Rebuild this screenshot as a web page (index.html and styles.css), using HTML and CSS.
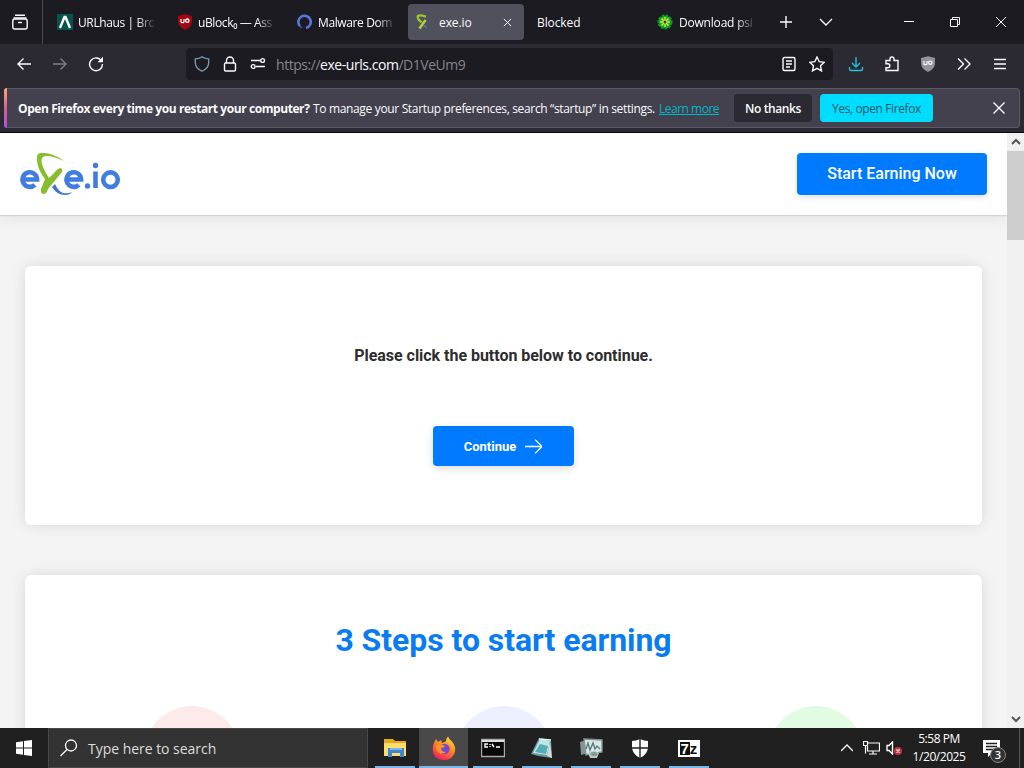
FILE: index.html
```html
<!DOCTYPE html>
<html lang="en">
<head>
<meta charset="utf-8">
<title>exe.io</title>
<link rel="stylesheet" href="styles.css">
</head>
<body>
<div class="screen">
  <div class="tabstrip">
    <div class="firefox-view"><svg class="i20" viewBox="0 0 20 20"><path d="M5 3.2h10M3.5 6h13"/><rect x="2.8" y="7" width="14.4" height="10" rx="2"/><path d="M8 10.5h4"/></svg></div>
    <div class="tab"><svg class="i16" viewBox="0 0 16 16"><path fill="#07544e" stroke="none" d="M0 0h16v16H0z"/><path stroke="#fff" stroke-width="2.4" d="M3 14 7.500 3h1L13 14"/></svg><span class="tab-title fade tight">URLhaus | Bro</span></div>
    <div class="tab"><svg class="i16" viewBox="0 0 16 16"><path fill="#a00812" stroke="none" d="M8 0 15 2v5q0 6-7 9Q1 13 1 7V2z"/><path stroke="#fff" stroke-width="1.2" d="M4 5v3q1.500 1.400 3 0V5"/><circle cx="10.3" cy="6.7" r="1.7" stroke="#fff" stroke-width="1.3"/></svg><span class="tab-title fade tight">uBlock₀ — Ass</span></div>
    <div class="tab"><svg class="i16" viewBox="0 0 16 16"><path stroke="#5877dc" stroke-width="2.6" d="M3 12.2A6.2 6.2 0 1 1 9 14"/><path stroke="#35498f" stroke-width="2" d="M3 12.2l2 1.7"/></svg><span class="tab-title fade tight">Malware Dom</span></div>
    <div class="tab tab-active"><svg class="i16" viewBox="0 0 16 16"><path stroke="#9fc62b" stroke-width="2.3" d="M11 2.600Q3 .2 2.600 2.400q0 3 4 6"/><path stroke="#b5d334" stroke-width="2.500" d="M10.500 6 4.500 14.500"/><path stroke="#527fa2" stroke-width="1.300" d="m8.500 11 3.500 3"/></svg><span class="tab-title">exe.io</span><svg class="tab-close" viewBox="0 0 10 10"><path d="m1 1 8 8M9 1 1 9"/></svg></div>
    <div class="tab tab-plain"><span class="tab-title">Blocked</span></div>
    <div class="tab"><svg class="i16" viewBox="0 0 16 16"><circle cx="8" cy="8" r="6.3" fill="#11bd24" stroke="#0b9a24" stroke-width="2.500" stroke-dasharray="2.500 1.200"/><path stroke="#dce844" stroke-width="1.300" d="M8 3v10M3 8h10M4.500 4.500l7 7M11.500 4.500l-7 7"/><circle cx="8" cy="8" r="1.500" fill="#433500" stroke="none"/></svg><span class="tab-title fade download">Download psi</span></div>
    <div class="tab-tools"><svg class="i16" viewBox="0 0 16 16"><path d="M8 2v12M2 8h12"/></svg><svg class="i16" viewBox="0 0 16 16"><path d="m2 5 6 6 6-6"/></svg></div>
    <div class="window-tools"><svg class="i12" viewBox="0 0 12 12"><path d="M1 5.500h10"/></svg><svg class="i12" viewBox="0 0 12 12"><path d="M1.500 3.500h7v7h-7zM3.500 3.500v-2h7v7h-2"/></svg><svg class="i12" viewBox="0 0 12 12"><path d="m1 1 10 10M11 1 1 11"/></svg></div>
  </div>

  <div class="navbar">
    <div class="nav-buttons">
      <svg class="i16" viewBox="0 0 16 16"><path d="M15 8H1.500M7.500 2.500 2 8l5.500 5.500"/></svg>
      <svg class="i16 dim" viewBox="0 0 16 16"><path d="M1 8h13.500M8.500 2.500 14 8l-5.500 5.500"/></svg>
      <svg class="i16" viewBox="0 0 16 16"><path d="M13.600 5.200A6.400 6.400 0 1 0 14.400 8"/><path fill="#fbfbfe" stroke="none" d="M15 .8V6.300H9.500z"/></svg>
    </div>
    <div class="urlbar">
      <div class="url-icons">
        <svg class="i16 shield" viewBox="0 0 16 16"><path d="M8 .9q3.500 1.900 6.700 2v3.600q0 5.800-6.700 8.700Q1.300 12.300 1.300 6.500V2.900Q4.500 2.800 8 .9z"/></svg>
        <svg class="i16" viewBox="0 0 16 16"><rect x="2.500" y="7" width="11" height="8" rx="1.200"/><path d="M4.500 7V4.500a3.500 3.500 0 0 1 7 0V7"/></svg>
        <svg class="i16" viewBox="0 0 16 16"><path d="M1 4.500h9M6 10.500h9"/><circle cx="12.600" cy="4.500" r="1.900"/><circle cx="3.200" cy="10.500" r="1.900"/></svg>
      </div>
      <div class="url">https://<span class="domain">exe-urls.com</span>/D1VeUm9</div>
      <div class="url-actions">
        <svg class="i16" viewBox="0 0 16 16"><rect x="2" y="1.500" width="12" height="13" rx="1.500"/><path d="M5 5h6M5 8h6M5 11h4"/></svg>
        <svg class="i16" viewBox="0 0 16 16"><path d="m8 1 2.200 4.700 5.100.6-3.800 3.500 1 5.100L8 12.400l-4.500 2.500 1-5.100L.7 6.300l5.100-.6z"/></svg>
      </div>
    </div>
    <div class="nav-tools">
      <svg class="i16 cyan" viewBox="0 0 16 16"><path d="M8 1v9.500M4 7l4 4 4-4M1.500 11v2q0 1.500 1.500 1.500h10q1.500 0 1.500-1.500v-2"/></svg>
      <svg class="i16" viewBox="0 0 16 16"><path d="M2 14.500h12V4.500h-4V3a2 2 0 0 0-4 0v1.500H2v3.300h1.800a2 2 0 0 1 0 4H2z"/></svg>
      <svg class="i16" viewBox="0 0 16 16"><path fill="#929298" stroke="none" d="M8 .3 15 2v5q0 6-7 9Q1 13 1 7V2z"/><path stroke-width="1.200" d="M4 5v3q1.500 1.400 3 0V5"/><circle cx="10.300" cy="6.700" r="1.700" stroke-width="1.200"/></svg>
      <svg class="i16" viewBox="0 0 16 16"><path d="m2 2.500 5.500 5.500L2 13.500M8.500 2.500 14 8l-5.500 5.500"/></svg>
      <svg class="i16" viewBox="0 0 16 16"><path d="M2 3.500h12M2 8h12M2 12.500h12"/></svg>
    </div>
  </div>

  <div class="notice-wrap">
    <div class="notice-accent"></div>
    <div class="notice">
      <strong class="notice-strong">Open Firefox every time you restart your computer?</strong>
      <span class="notice-copy">To manage your Startup preferences, search “startup” in settings.</span>
      <span class="notice-link">Learn more</span>
      <span class="notice-button no">No thanks</span>
      <span class="notice-button yes">Yes, open Firefox</span>
      <svg class="notice-close" viewBox="0 0 12 12"><path d="m.5.5 11 11M11.500.5l-11 11"/></svg>
    </div>
  </div>

  <div class="viewport">
    <div class="page">
      <header class="site-header">
        <svg class="logo" viewBox="0 0 102 44" role="img" aria-label="exe.io">
          <g class="logo-blue"><path d="M2.500 26.500h14.600a7.300 7.300 0 1 0-2.200 5.300M46.500 26.500h14.600a7.300 7.300 0 1 0-2.200 5.300M75.500 18.500v16.500"/><circle cx="90.500" cy="26.700" r="7.300"/></g>
          <circle class="logo-dot" cx="67.500" cy="33" r="2.700"/><circle class="logo-dot" cx="75.500" cy="12.500" r="2.700"/>
          <path fill="#88bd2d" d="M44 8Q32-1 20 0q-4 1-3 8 1 9 8 18l-4 10q-1 4 2 5 4 0 5-5l14-17q1-4-2-4-3 1-5 4l-6 6Q18 8 23 4q5-3 21 4z"/>
          <path fill="#3e75d5" d="m35 31q3 7 8 9 5 1 9-1-2 3-7 3-8 0-13-8z"/>
        </svg>
        <div class="blue-button earn">Start Earning Now</div>
      </header>
      <main class="content">
        <section class="card gate">
          <p class="prompt">Please click the button below to continue.</p>
          <div class="blue-button continue"><span>Continue</span><svg class="continue-arrow" viewBox="0 0 16 16"><path d="M0 8h15.300M9.500 1.500 16 8l-6.500 6.500"/></svg></div>
        </section>
        <section class="card steps">
          <h2 class="steps-title">3 Steps to start earning</h2>
          <div class="step-icons"><span class="disc pink"></span><span class="disc lilac"></span><span class="disc mint"></span></div>
        </section>
      </main>
    </div>
    <div class="scrollbar"><svg class="arrow" viewBox="0 0 10 10"><path d="m1 7 4-4 4 4"/></svg><div class="thumb"></div><svg class="arrow down" viewBox="0 0 10 10"><path d="m1 3 4 4 4-4"/></svg></div>
  </div>

  <div class="taskbar">
    <div class="start"><svg class="i16" viewBox="0 0 16 16"><path fill="#fff" stroke="none" d="M0 2.200 7 1.200v6.300H0zM8 1.100 16 0v7.500H8zM0 8.500h7v6.300l-7-1zM8 8.500h8V16l-8-1.100z"/></svg></div>
    <div class="search"><svg class="i18" viewBox="0 0 18 18"><circle cx="11" cy="6.500" r="5.500"/><path d="m7 10.500-6.500 6.500"/></svg><span>Type here to search</span></div>
    <div class="apps">
      <div class="app"><svg class="app-icon" viewBox="0 0 24 24"><path fill="#e7a91c" d="M1 3h9l2 2h11v14H1z"/><path fill="#ffdc6b" d="M1 7h22v13H1z"/><path fill="#3c86d2" d="M5 12h16v9h-4v-4H9v4H5z"/><path fill="#79b9ed" d="M7 12h12v2H7z"/></svg></div>
      <div class="app current"><svg class="app-icon" viewBox="0 0 24 24"><defs><linearGradient id="fox" x1=".8" y1="0" x2=".3" y2="1"><stop offset="0" stop-color="#ffe13c"/><stop offset=".45" stop-color="#ff8a20"/><stop offset="1" stop-color="#f51d62"/></linearGradient></defs><path fill="url(#fox)" d="M16 .5q1 3 4 5 4 5 3 10-2 8.500-11 8.500-9 0-11-8Q0 10 3 5l1-2 2 3 3-2 1 3q3-1 4-2 0-3 2-4.500z"/><circle cx="12.500" cy="13" r="5.200" fill="#7649cc"/><path fill="#ff9425" d="M5 9q5-1 8 1-1 2-4 2 0 4 5 4-4 3-8 0-3-3-1-7z"/></svg></div>
      <div class="app"><svg class="app-icon" viewBox="0 0 24 24"><path fill="#080808" stroke="#a9a9a9" d="M.5 3.500h23v17H.500z"/><path fill="#ddd" d="M1 4h22v2H1z"/><path stroke="#fff" fill="none" d="M7 8H4v3h3M9 8v1M9 10v1M11 8l2 3M15 11h4"/></svg></div>
      <div class="app"><svg class="app-icon" viewBox="0 0 24 24"><path fill="#6c9395" d="m1 18 8-16 12 2 1 18-14-2z"/><path fill="#b9e7ea" d="m3 17 7-14 10 2-3 14z"/><path fill="#55adb9" d="m5 16 5-8 8 2-2 8z"/><path stroke="#e5f4f4" d="m9 3 12 1"/><path fill="#d1d9d4" d="m20 5 2 17-5-2z"/></svg></div>
      <div class="app"><svg class="app-icon" viewBox="0 0 24 24"><path fill="#84938f" d="M1 6 10 3v14l-8 2z"/><path fill="#dde6e4" stroke="#7f9692" d="m5 3 18 1v12L7 19z"/><path stroke="#527f80" fill="none" d="M7 13l2-6 2 7 3-7 2 6 2-3 3 3"/><path fill="#bdc9c6" d="M9 17q5-4 11 0l-2 5h-7z"/><ellipse cx="15" cy="18" rx="3.500" ry="2" fill="#839a98"/></svg></div>
      <div class="app"><svg class="app-icon" viewBox="0 0 24 24"><path fill="#fff" d="M12 3q4 2 8 2v6q0 7-8 11-8-4-8-11V5q4 0 8-2z"/><path stroke="#202020" stroke-width="1.400" d="M12 2v20M3 12h18"/></svg></div>
      <div class="app"><span class="seven"><b>7</b><span>z</span></span></div>
    </div>
    <div class="tray">
      <svg class="tray-up" viewBox="0 0 12 8"><path d="m0 7 6-6 6 6"/></svg>
      <svg class="network" viewBox="0 0 17 14"><path d="M4.500 2h12v8H4.500zM10 10v3M6 13h8M.5.500h4v4h-4zM2.500 4.500v8"/></svg>
      <svg class="sound" viewBox="0 0 18 14"><path d="M1 4.500h2l3.500-3.500v12L3 9.500H1z"/><circle cx="12" cy="10" r="4" fill="#c9303f" stroke="none"/><path stroke-width="1.200" d="m10.500 8.500 3 3m0-3-3 3"/></svg>
      <div class="clock"><span>5:58 PM</span><span>1/20/2025</span></div>
      <div class="notifications"><svg class="message" viewBox="0 0 17 17"><path fill="#fff" stroke="none" d="M0 0h17v13H9l-4 4v-4H0z"/><path stroke="#202020" d="M3 3.500h11M3 6.500h11M3 9.500h8"/></svg><span class="badge">3</span></div>
      <div class="show-desktop"></div>
    </div>
  </div>
</div>
</body>
</html>
```

FILE: styles.css
```css
* { box-sizing: border-box; }
body { margin: 0; font-family: "Open Sans", "Noto Sans", sans-serif; }
svg { display: block; flex: none; fill: none; stroke: #fbfbfe; stroke-width: 1.4; }
.screen { width: 1024px; height: 768px; display: flex; flex-direction: column; overflow: hidden; background: #2b2a33; }
.i12 { width: 12px; height: 12px; stroke-width: 1; }
.i16 { width: 16px; height: 16px; }
.i18 { width: 18px; height: 18px; stroke-width: 1.3; }
.i20 { width: 20px; height: 20px; }

.tabstrip { height: 44px; flex: none; display: flex; align-items: center; background: #1c1b22; color: #fbfbfe; font-size: 12px; letter-spacing: -.1px; }
.firefox-view { width: 43px; height: 44px; padding: 12px 0 0 10px; border-right: 1px solid #4c4b55; margin-right: 5px; }
.tab { width: 120px; height: 36px; padding: 0 9px; display: flex; align-items: center; gap: 5px; border-radius: 4px; }
.tab-active { width: 116px; background: #51505d; gap: 8px; padding: 0 12px 0 7px; }
.tab-active .tab-title { flex: 1; }
.tab-plain { width: 124px; padding-left: 13px; }
.tab-title { flex: 1; min-width: 0; white-space: nowrap; }
.fade { max-width: 76px; -webkit-mask-image: linear-gradient(90deg, #000 77%, #0002); mask-image: linear-gradient(90deg, #000 77%, #0002); }
.tight { letter-spacing: -.38px; }
.download { padding-left: 1px; letter-spacing: -.2px; }
.tab-close { width: 9px; height: 9px; stroke-width: 1.1; }
.tab-tools { display: flex; gap: 24px; padding-left: 10px; }
.window-tools { display: flex; gap: 34px; margin-left: auto; padding-right: 17px; }

.navbar { height: 44px; flex: none; display: flex; align-items: center; padding-bottom: 4px; }
.nav-buttons { width: 186px; display: flex; gap: 20px; padding-left: 16px; }
.dim { opacity: .4; }
.urlbar { width: 647px; height: 32px; display: flex; align-items: center; padding: 0 8px; border-radius: 4px; background: #1c1b22; }
.url-icons { display: flex; gap: 12px; width: 82px; }
.shield { stroke: #7895ad; }
.url { flex: 1; color: #86858e; font-size: 14px; letter-spacing: -.46px; }
.domain { color: #fbfbfe; }
.url-actions { display: flex; gap: 12px; }
.nav-tools { display: flex; gap: 20px; padding-left: 15px; }
.cyan { stroke: #20c3d8; }

.notice-wrap { height: 45px; flex: none; display: flex; padding: 0 4px 4px; border-bottom: 1px solid #09080c; }
.notice-accent { width: 3px; height: 40px; border-radius: 3px 0 0 3px; background: linear-gradient(#ffad77, #dc5b99 50%, #b44de0); }
.notice { flex: 1; height: 40px; display: flex; align-items: center; padding: 0 14px 0 11px; border: 1px solid #5b5965; border-left: 0; border-radius: 0 4px 4px 0; background: #42414d; color: #fbfbfe; font-size: 12px; white-space: nowrap; }
.notice-strong { width: 295px; letter-spacing: -.42px; }
.notice-copy { width: 346px; letter-spacing: -.34px; }
.notice-link { width: 75px; color: #00b8ca; text-decoration: underline; letter-spacing: -.5px; }
.notice-button { height: 28px; display: flex; align-items: center; justify-content: center; border-radius: 4px; letter-spacing: -.4px; }
.no { width: 78px; margin-right: 8px; background: #2b2a33; font-weight: 600; }
.yes { width: 113px; background: #00ddff; color: #245565; }
.notice-close { width: 12px; height: 12px; margin-left: auto; }

.viewport { height: 595px; flex: none; display: flex; }
.page { width: 1007px; background: #f4f4f4; font-family: Roboto, sans-serif; overflow: hidden; }
.site-header { height: 82px; padding: 20px 20px 0; display: flex; justify-content: space-between; background: #fff; box-shadow: 0 1px 1px #d2d2d2, 0 3px 14px #e2e2e2; }
.logo { width: 102px; height: 44px; }
.logo-blue { stroke: #417de0; stroke-width: 4.6; }
.logo-dot { fill: #417de0; stroke: none; }
.logo path[fill] { stroke: none; }
.blue-button { display: flex; align-items: center; justify-content: center; background: #007bff; color: #fff; border-radius: 4px; }
.earn { width: 190px; height: 42px; padding-bottom: 2px; font-size: 16px; font-weight: 500; box-shadow: 0 2px 6px #dedede; }
.content { display: flex; flex-direction: column; gap: 50px; padding: 51px 25px 0; }
.card { height: 259px; background: #fff; border-radius: 6px; box-shadow: 0 0 14px #d9d9d9; display: flex; flex-direction: column; align-items: center; }
.prompt { margin: 80px 0 60px; color: #2d2d2d; font-size: 16px; font-weight: 700; line-height: 20px; letter-spacing: -.03px; }
.continue { width: 141px; height: 40px; padding-right: 1px; gap: 9px; font-size: 13px; font-weight: 700; box-shadow: 0 3px 9px #dedede; }
.continue-arrow { width: 17px; height: 17px; stroke-width: 1.2; }
.steps-title { margin: 45px 0 46px; color: #087cf0; font-size: 32px; font-weight: 700; line-height: 40px; letter-spacing: -.05px; }
.step-icons { width: 936px; display: flex; }
.disc { width: 96px; height: 96px; flex: none; margin: 0 108px; border-radius: 50%; }
.pink { background: #fdeaea; }
.lilac { background: #eceffd; }
.mint { background: #e2fce3; }
.scrollbar { width: 17px; background: #f0f0f0; display: flex; flex-direction: column; align-items: center; }
.arrow { width: 10px; height: 10px; margin: 4px 0; stroke: #555; stroke-width: 2; }
.thumb { width: 17px; height: 89px; background: #cdcdcd; }
.down { margin-top: auto; }

.taskbar { height: 40px; flex: none; display: flex; background: #202020; color: #fff; }
.start { width: 48px; padding: 12px 16px; }
.search { width: 320px; display: flex; align-items: center; gap: 10px; padding-left: 11px; background: #333; border: 1px solid #484848; font-size: 14px; color: #ddd; letter-spacing: -.03px; }
.apps { display: flex; padding-left: 2px; }
.app { width: 49px; display: flex; align-items: center; justify-content: center; background: linear-gradient(#78b7e8, #78b7e8) center bottom / 40px 2px no-repeat; }
.current { background: linear-gradient(#78b7e8, #78b7e8) center bottom / 49px 2px no-repeat, #494949; }
.app-icon { width: 24px; height: 24px; stroke: none; }
.seven { width: 22px; height: 17px; display: flex; align-items: center; justify-content: center; background: #fff; color: #111; font: bold 15px/15px "Liberation Sans", sans-serif; }
.seven b { width: 10px; height: 13px; line-height: 13px; text-align: center; background: #111; color: #fff; }
.tray { margin-left: auto; display: flex; align-items: center; }
.tray-up { width: 12px; height: 8px; margin-right: 10px; }
.network { width: 17px; height: 14px; margin-right: 6px; stroke-width: 1.2; }
.sound { width: 18px; height: 14px; margin-right: 5px; }
.clock { width: 60px; display: flex; flex-direction: column; align-items: center; font-size: 12px; line-height: 18px; letter-spacing: -.45px; }
.notifications { position: relative; width: 50px; height: 40px; padding: 12px 0 0 14px; }
.message { width: 17px; height: 17px; }
.badge { position: absolute; left: 21px; top: 19px; width: 16px; height: 16px; border: 1px solid #888; border-radius: 50%; background: #333; font-size: 11px; font-weight: 600; line-height: 14px; text-align: center; }
.show-desktop { width: 5px; height: 40px; border-left: 1px solid #555; }
```
